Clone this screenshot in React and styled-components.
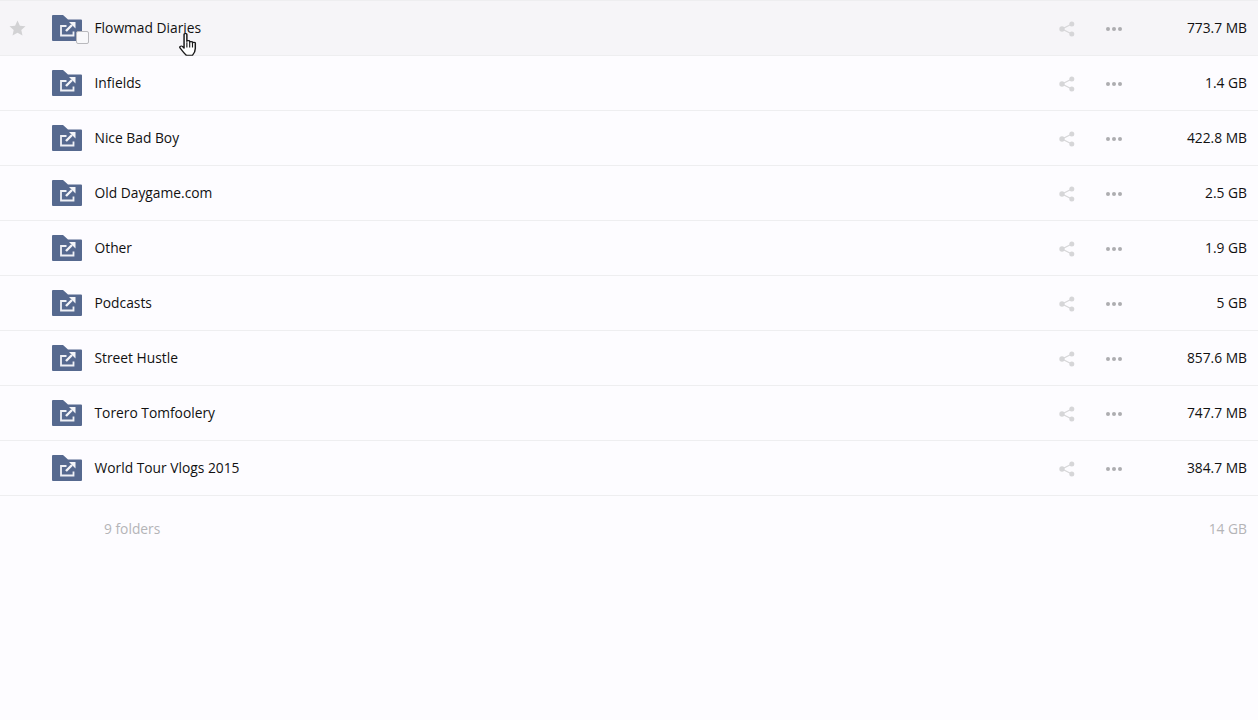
import styled, { createGlobalStyle } from "styled-components";

const GlobalStyle = createGlobalStyle`
  html, body {
    margin: 0;
    padding: 0;
    background: #fdfcff;
  }
  * {
    box-sizing: border-box;
  }
`;

const Page = styled.div`
  position: relative;
  width: 100%;
  height: 720px;
  overflow: hidden;
  background: #fdfcff;
  font-family: "Open Sans", "Liberation Sans", sans-serif;
  font-size: 13.8px;
  color: #111;
`;

const List = styled.div`
  border-top: 1px solid #eeeef0;
`;

const Row = styled.div`
  display: flex;
  align-items: center;
  height: 55px;
  padding-right: 11px;
  border-bottom: 1px solid #eeeef0;
  background: ${(p) => (p.$hover ? "#f6f5f8" : "transparent")};
`;

const StarCell = styled.div`
  display: flex;
  justify-content: center;
  width: 52px;
  padding-right: 18px;
  padding-bottom: 1px;
  color: #d2d2d4;
`;

const IconCell = styled.div`
  position: relative;
  display: flex;
  width: 42.5px;
`;

const Check = styled.div`
  position: absolute;
  left: 24px;
  top: 16px;
  width: 13px;
  height: 13px;
  background: #f8f8fa;
  border: 1px solid #b9b9bd;
  border-radius: 2px;
`;

const Name = styled.div`
  flex: 1;
  padding-bottom: 2px;
`;

const ShareCell = styled.div`
  display: flex;
  width: 47px;
  padding-top: 2px;
  color: #d6d6d8;
`;

const MoreCell = styled.div`
  display: flex;
  gap: 2px;
  width: 65px;
  padding-top: 2px;
`;

const Dot = styled.span`
  width: 4px;
  height: 4px;
  border-radius: 50%;
  background: #adadb0;
`;

const Size = styled.div`
  width: 76px;
  padding-bottom: 2px;
  text-align: right;
`;

const Footer = styled.div`
  display: flex;
  justify-content: space-between;
  padding: 23px 11px 0 104px;
  line-height: 19px;
  color: #b4b4b7;
`;

const Cursor = styled.svg`
  position: absolute;
  left: 179px;
  top: 33px;
`;

const folders = [
  ["Flowmad Diaries", "773.7 MB"],
  ["Infields", "1.4 GB"],
  ["Nice Bad Boy", "422.8 MB"],
  ["Old Daygame.com", "2.5 GB"],
  ["Other", "1.9 GB"],
  ["Podcasts", "5 GB"],
  ["Street Hustle", "857.6 MB"],
  ["Torero Tomfoolery", "747.7 MB"],
  ["World Tour Vlogs 2015", "384.7 MB"],
];

const Star = () => (
  <svg width="17" height="16" viewBox="0 0 17 16" fill="currentColor">
    <path d="M8.500 0.500l2.400 5.200 5.600.600-4.200 3.800 1.200 5.500-5-2.800-5 2.800 1.200-5.500L.500 6.300l5.600-.600z" />
  </svg>
);

const FolderIcon = () => (
  <svg width="30" height="26" viewBox="0 0 30 26">
    <path
      d="M0 1 Q0 0 1 0 H11 L16 4.500 H29 Q30 4.500 30 5.500 V25 Q30 26 29 26 H1 Q0 26 0 25 Z"
      fill="#56698f"
    />
    <path
      d="M14.500 11 H9 V20.500 H21.500 V16.500"
      fill="none"
      stroke="#eef0f5"
      strokeWidth="1.800"
    />
    <path d="M14 16 L20 10" fill="none" stroke="#f4f5f8" strokeWidth="2.400" />
    <path d="M17 7 H23.500 V13.500 Z" fill="#f4f5f8" />
  </svg>
);

const ShareIcon = () => (
  <svg width="16" height="16" viewBox="0 0 16 16" fill="currentColor">
    <circle cx="12.800" cy="3" r="2.500" />
    <circle cx="3" cy="8" r="2.700" />
    <circle cx="12.800" cy="13" r="2.500" />
    <path d="M3 8l9.800-5M3 8l9.800 5" stroke="currentColor" strokeWidth="1.200" />
  </svg>
);

const App = () => {
  return (
    <Page>
      <GlobalStyle />
      <List>
        {folders.map(([name, size], i) => (
          <Row key={name} $hover={i === 0}>
            <StarCell>{i === 0 && <Star />}</StarCell>
            <IconCell>
              <FolderIcon />
              {i === 0 && <Check />}
            </IconCell>
            <Name>{name}</Name>
            <ShareCell>
              <ShareIcon />
            </ShareCell>
            <MoreCell>
              <Dot />
              <Dot />
              <Dot />
            </MoreCell>
            <Size>{size}</Size>
          </Row>
        ))}
      </List>
      <Footer>
        <span>9 folders</span>
        <span>14 GB</span>
      </Footer>
      <Cursor width="18" height="23" viewBox="0.500 0.800 16 25.500" preserveAspectRatio="none">
        <path
          d="M5 2.500c0-1.500 2.500-1.500 2.500 0V10c0-1 2.500-1 2.500 0v1c0-1 2.500-1 2.500 0v1c0-1 2.500-1 2.500 0v6c0 3-1.500 6-2.500 7.500H7C5.500 24 3 20 1.500 17.500c-1-1.500.8-3 2-1.800L5 17.500z"
          fill="#fff"
          stroke="#1a1a1a"
          strokeWidth="1.300"
          strokeLinejoin="round"
        />
        <path d="M7.500 11v6M10 11v6M12.500 12v5" stroke="#1a1a1a" strokeWidth="1" />
      </Cursor>
    </Page>
  );
};

export default App;
